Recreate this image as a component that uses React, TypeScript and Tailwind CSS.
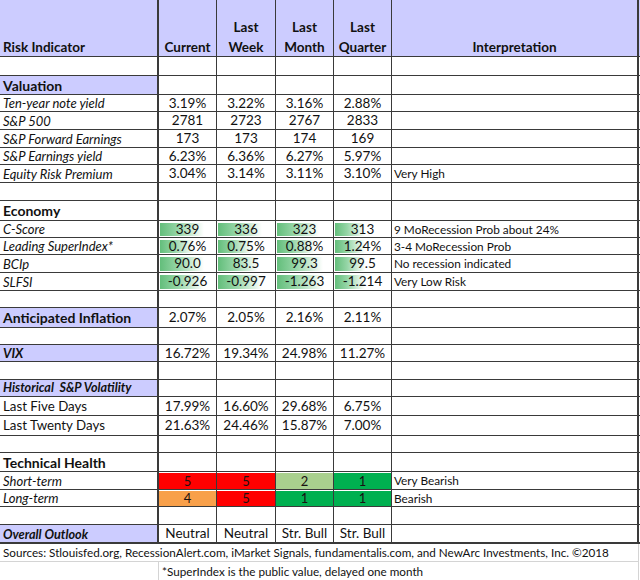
import type { ReactNode } from 'react';

const GRID = 'grid grid-cols-[159px_58px_59px_58px_58px_247px]';
const LINE = 'border-[#3a3a3a]';

type Val = ReactNode;

function Cell({ children, className = '' }: { children?: ReactNode; className?: string }) {
  return (
    <div className={`flex items-center justify-center overflow-visible whitespace-nowrap border-r ${LINE} ${className}`}>
      {children}
    </div>
  );
}

function Label({ children, className = '' }: { children?: ReactNode; className?: string }) {
  return (
    <div className={`flex items-center whitespace-nowrap border-r-2 ${LINE} pl-[3px] pt-px ${className}`}>{children}</div>
  );
}

function Row({
  h,
  label,
  labelClass = '',
  values = [],
  note,
  bottom = 'border-b',
}: {
  h: string;
  label?: ReactNode;
  labelClass?: string;
  values?: Val[];
  note?: ReactNode;
  bottom?: string;
}) {
  const v = [0, 1, 2, 3].map((i) => values[i]);
  return (
    <div className={`${GRID} ${h} ${bottom} ${LINE}`}>
      <Label className={labelClass}>{label}</Label>
      {v.map((x, i) => (
        <Cell key={i} className="pt-px text-[13.5px]">
          {x}
        </Cell>
      ))}
      <div className={`flex items-center whitespace-nowrap border-r-2 ${LINE} pl-[2px] pt-px text-[11.8px]`}>{note}</div>
    </div>
  );
}

function Bar({ value, width }: { value: string; width: number }) {
  return (
    <div className="relative -mt-px flex h-full w-full items-center justify-center">
      <div
        className="absolute top-px bottom-px left-px bg-[linear-gradient(to_right,#63be7b,#95d5a6_40%,#ffffff)]"
        style={{ width }}
      />
      <span className="relative pt-px">{value}</span>
    </div>
  );
}

function Heat({ value, color }: { value: string; color: string }) {
  return (
    <div className={`-mt-px flex h-full w-full items-center justify-center pt-px text-[13px] text-[#1a1111] ${color}`}>
      {value}
    </div>
  );
}

const economy: { label: string; bars: [string, number][]; note: string }[] = [
  { label: 'C-Score', bars: [['339', 44], ['336', 44], ['323', 42], ['313', 30]], note: '9 MoRecession Prob about 24%' },
  { label: 'Leading SuperIndex*', bars: [['0.76%', 34], ['0.75%', 34], ['0.88%', 38], ['1.24%', 30]], note: '3-4 MoRecession Prob' },
  { label: 'BCIp', bars: [['90.0', 44], ['83.5', 40], ['99.3', 46], ['99.5', 30]], note: 'No recession indicated' },
  { label: 'SLFSI', bars: [['-0.926', 44], ['-0.997', 44], ['-1.263', 46], ['-1.214', 30]], note: 'Very Low Risk' },
];

export default function App() {
  return (
    <div className="w-[640px] h-[580px] bg-white text-[#111] font-['Lato','Open_Sans',sans-serif] leading-none">
      {/* header */}
      <div className={`${GRID} h-[57px] border-b ${LINE} bg-[#ccccff] font-bold text-[13.5px]`}>
        <div className={`flex items-end border-r-2 ${LINE} pl-[3px] pb-[2px]`}>Risk Indicator</div>
        <div className={`flex items-end justify-center border-r ${LINE} pb-[2px]`}>Current</div>
        <div className={`flex flex-col items-center justify-end gap-[6px] border-r ${LINE} pb-[2px]`}>
          <span>Last</span>
          <span>Week</span>
        </div>
        <div className={`flex flex-col items-center justify-end gap-[6px] border-r ${LINE} pb-[2px]`}>
          <span>Last</span>
          <span>Month</span>
        </div>
        <div className={`flex flex-col items-center justify-end gap-[6px] border-r ${LINE} pb-[2px]`}>
          <span>Last</span>
          <span>Quarter</span>
        </div>
        <div className={`flex items-end justify-center border-r-2 ${LINE} pb-[2px]`}>Interpretation</div>
      </div>

      <Row h="h-[19px]" />
      <Row h="h-[19px]" label="Valuation" labelClass="bg-[#ccccff] font-bold text-[14px]" />
      <Row h="h-[17px]" label="Ten-year note yield" labelClass="italic text-[13px]" values={['3.19%', '3.22%', '3.16%', '2.88%']} />
      <Row h="h-[18px]" label="S&P 500" labelClass="italic text-[13px]" values={['2781', '2723', '2767', '2833']} />
      <Row h="h-[18px]" label="S&P Forward Earnings" labelClass="italic text-[13px]" values={['173', '173', '174', '169']} />
      <Row h="h-[17px]" label="S&P Earnings yield" labelClass="italic text-[13px]" values={['6.23%', '6.36%', '6.27%', '5.97%']} />
      <Row
        h="h-[18px]"
        label="Equity Risk Premium"
        labelClass="italic text-[13px]"
        values={['3.04%', '3.14%', '3.11%', '3.10%']}
        note="Very High"
      />
      <Row h="h-[18px]" />
      <Row h="h-[20px]" label="Economy" labelClass="font-bold text-[14px]" />
      {economy.map((r, i) => (
        <Row
          key={r.label}
          h={i === 0 || i === 1 ? 'h-[17px]' : 'h-[18px]'}
          label={r.label}
          labelClass="italic text-[13px]"
          values={r.bars.map(([v, w]) => (
            <Bar key={v} value={v} width={w} />
          ))}
          note={r.note}
        />
      ))}
      <Row h="h-[17px]" />
      <Row
        h="h-[20px]"
        label="Anticipated Inflation"
        labelClass="bg-[#ccccff] font-bold text-[14px]"
        values={['2.07%', '2.05%', '2.16%', '2.11%']}
      />
      <Row h="h-[17px]" />
      <Row
        h="h-[17px]"
        label="VIX"
        labelClass="bg-[#ccccff] font-bold italic text-[13px]"
        values={['16.72%', '19.34%', '24.98%', '11.27%']}
      />
      <Row h="h-[18px]" />
      <Row h="h-[17px]" label="Historical  S&P Volatility" labelClass="bg-[#ccccff] font-bold italic text-[12.6px] whitespace-pre" />
      <Row
        h="h-[19px]"
        label="Last Five Days"
        labelClass="text-[13.3px]"
        values={['17.99%', '16.60%', '29.68%', '6.75%']}
      />
      <Row
        h="h-[20px]"
        label="Last Twenty Days"
        labelClass="text-[13.3px]"
        values={['21.63%', '24.46%', '15.87%', '7.00%']}
      />
      <Row h="h-[17px]" />
      <Row h="h-[19px]" label="Technical Health" labelClass="font-bold text-[14px]" />
      <Row
        h="h-[18px]"
        label="Short-term"
        labelClass="italic text-[13px]"
        values={[
          <Heat key="a" value="5" color="bg-[#ff0000]" />,
          <Heat key="b" value="5" color="bg-[#ff0000]" />,
          <Heat key="c" value="2" color="bg-[#a9d08e]" />,
          <Heat key="d" value="1" color="bg-[#00b050]" />,
        ]}
        note="Very Bearish"
      />
      <Row
        h="h-[17px]"
        label="Long-term"
        labelClass="italic text-[13px]"
        values={[
          <Heat key="a" value="4" color="bg-[#f8a04a]" />,
          <Heat key="b" value="5" color="bg-[#ff0000]" />,
          <Heat key="c" value="1" color="bg-[#00b050]" />,
          <Heat key="d" value="1" color="bg-[#00b050]" />,
        ]}
        note="Bearish"
      />
      <Row h="h-[18px]" />
      <Row
        h="h-[19px]"
        bottom="border-b-2"
        label="Overall Outlook"
        labelClass="bg-[#ccccff] font-bold italic text-[12.7px]"
        values={['Neutral', 'Neutral', 'Str. Bull', 'Str. Bull']}
      />

      {/* footnotes */}
      <div className="flex h-[18px] w-[639px] items-center border-b border-r border-[#d4d4d4] pl-[3px] pt-px text-[11.7px] whitespace-nowrap">
        Sources: Stlouisfed.org, RecessionAlert.com, iMarket Signals, fundamentalis.com, and NewArc Investments, Inc. ©2018
      </div>
      <div className="grid h-[19px] w-[639px] grid-cols-[159px_480px] border-b border-r border-[#d4d4d4] text-[11.7px]">
        <div className="border-r border-[#d4d4d4]" />
        <div className="flex items-center pl-[3px] pt-px whitespace-nowrap">*SuperIndex is the public value, delayed one month</div>
      </div>
    </div>
  );
}
